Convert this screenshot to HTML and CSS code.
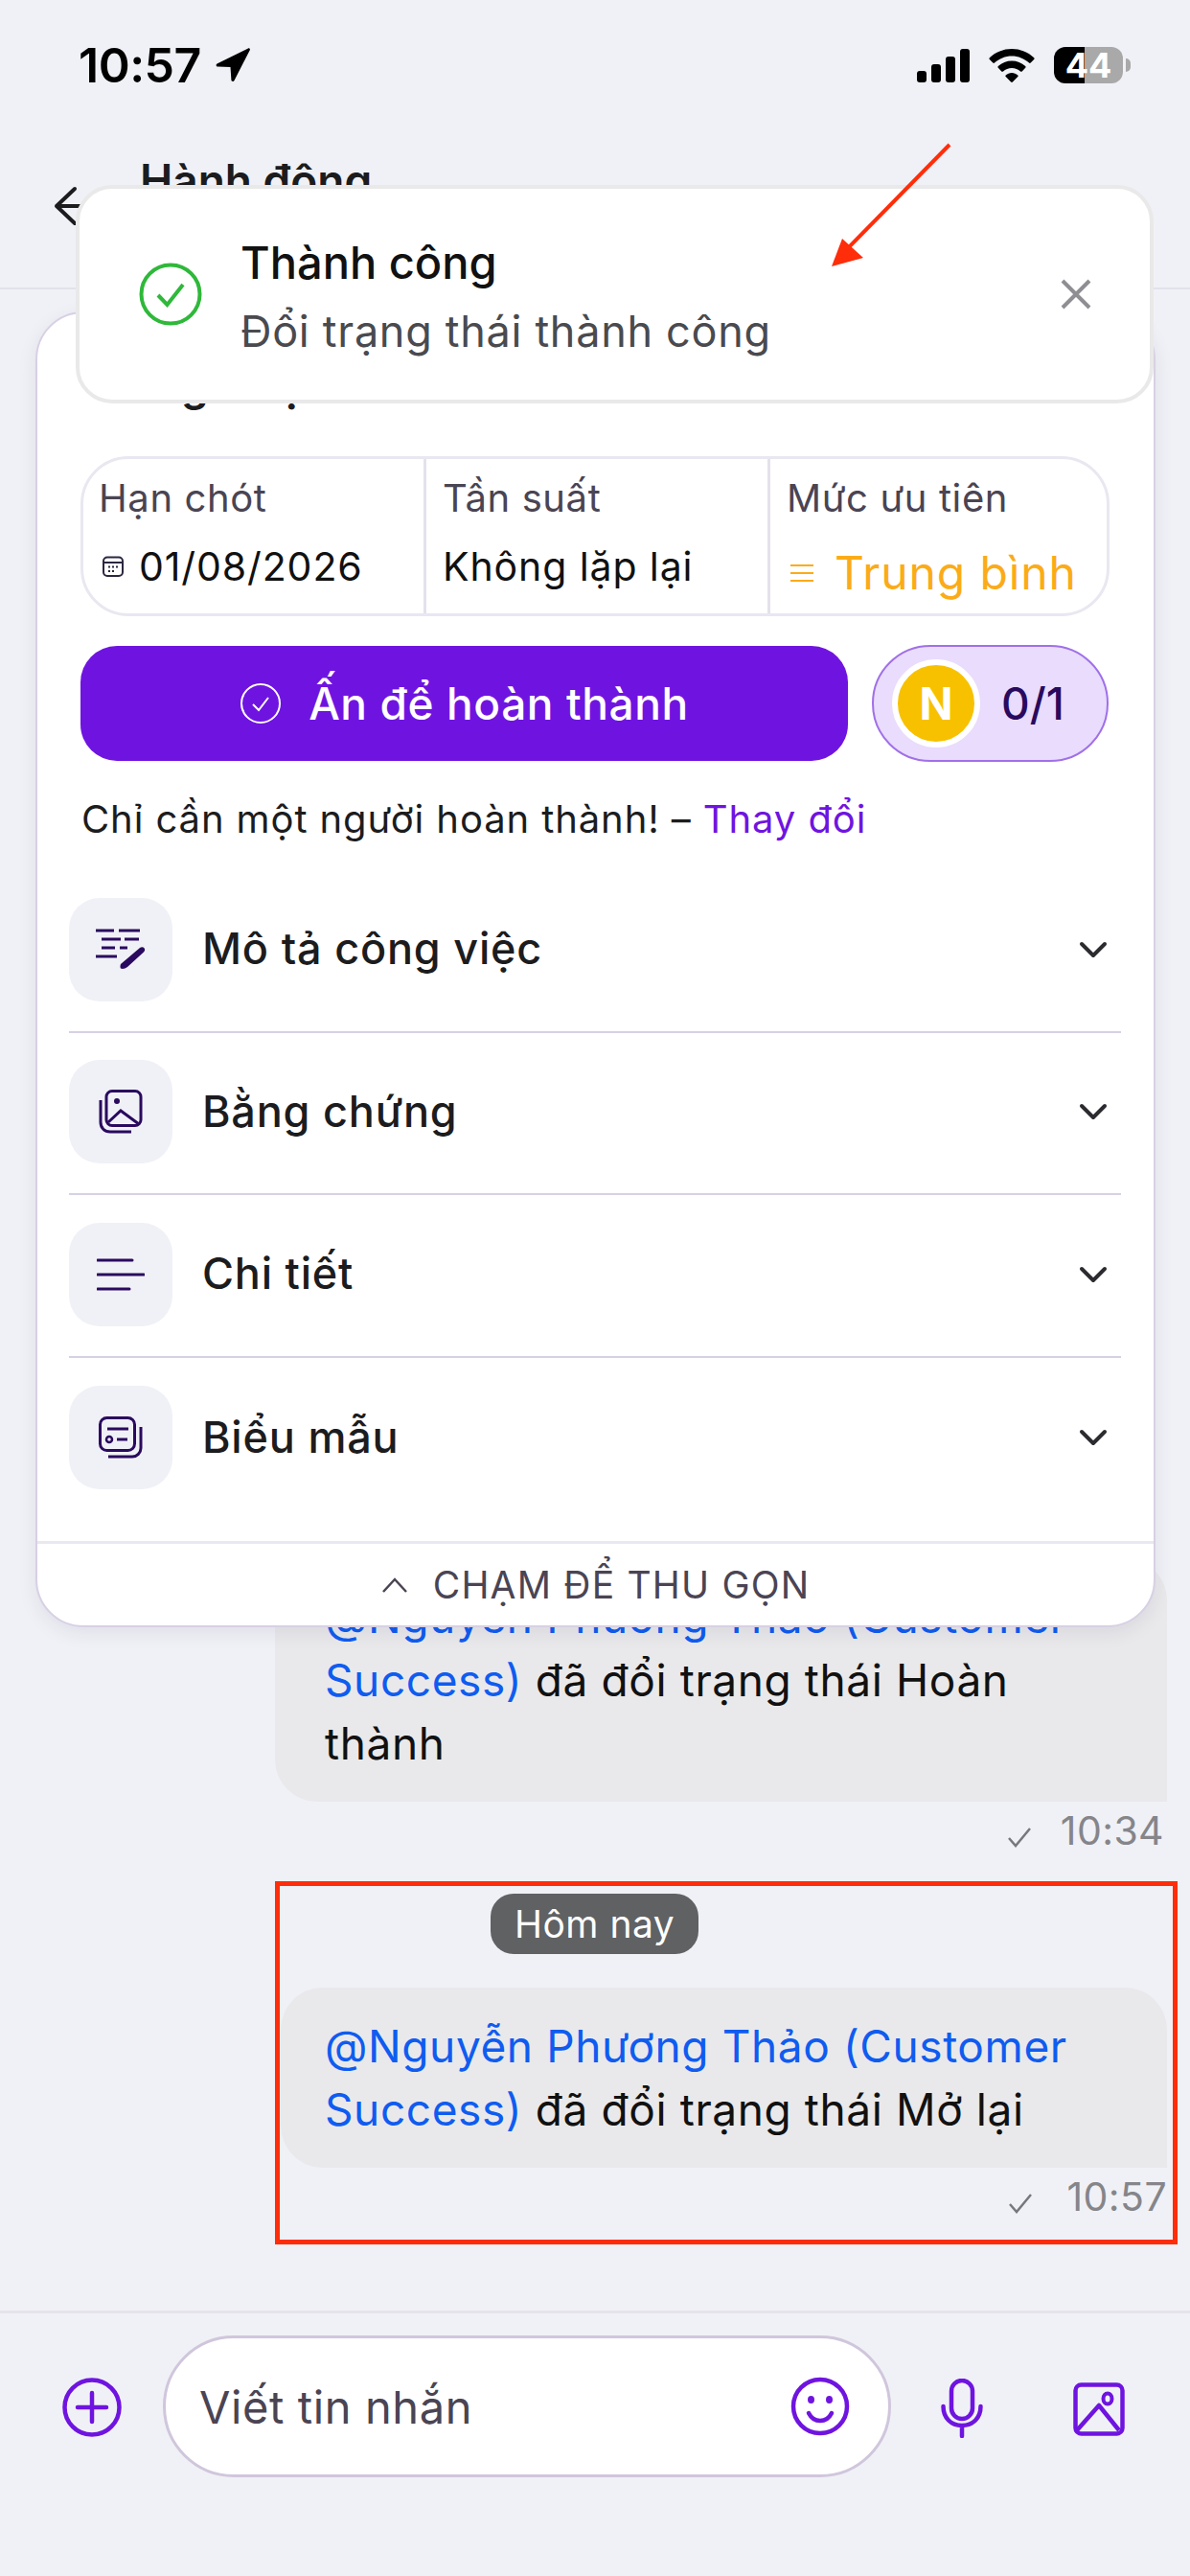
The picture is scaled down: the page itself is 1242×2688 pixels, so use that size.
FILE: index.html
```html
<!DOCTYPE html>
<html lang="vi">
<head>
  <meta charset="UTF-8">
  <meta name="viewport" content="width=device-width, initial-scale=1.0">
  <title>Hành động</title>
  <link rel="stylesheet" href="styles.css">
</head>
<body>
  <div class="screen">
    <!-- Status bar -->
    <div class="status-bar">
      <div class="status-left">
        <span class="clock">10:57</span>
        <svg class="loc-icon" width="38" height="38" viewBox="0 0 38 38"><path d="M35 1.500 2.500 17.500c-1.500.8-1 3 .7 3l13.300.6.9 13.400c.2 1.700 2.400 2 3.100.5L36.800 3.200c.5-1.100-.7-2.300-1.800-1.700z" fill="#000"/></svg>
      </div>
      <div class="status-right">
        <svg width="55" height="35" viewBox="0 0 55 35"><rect x="0" y="23" width="10" height="12" rx="3"/><rect x="15" y="16" width="10" height="19" rx="3"/><rect x="30" y="8" width="10" height="27" rx="3"/><rect x="45" y="0" width="10" height="35" rx="3"/></svg>
        <svg class="wifi" width="48" height="35" viewBox="0 0 48 35"><path d="M24 0c8.800 0 17 3.400 23.200 9.300.5.500.5 1.200 0 1.700l-3.500 3.600c-.5.500-1.200.5-1.700 0C37.200 10 30.800 7.400 24 7.400S10.800 10 6 14.600c-.5.500-1.200.5-1.700 0L.8 11c-.5-.5-.5-1.200 0-1.700C7 3.400 15.200 0 24 0zm0 12.500c5.300 0 10.300 2 14.200 5.600.5.500.5 1.200 0 1.700l-3.500 3.600c-.5.500-1.200.5-1.700 0-2.400-2.200-5.600-3.500-9-3.500s-6.600 1.300-9 3.500c-.5.500-1.200.5-1.700 0l-3.500-3.600c-.5-.5-.5-1.200 0-1.700 3.900-3.600 8.900-5.600 14.200-5.600zm0 12.500c2.400 0 4.600.9 6.300 2.400.5.500.5 1.200 0 1.700l-5.400 5.500c-.5.500-1.300.5-1.800 0l-5.400-5.500c-.5-.5-.5-1.200 0-1.700 1.700-1.500 3.900-2.400 6.300-2.400z"/></svg>
        <div class="battery"><span class="battery-level">44</span></div>
      </div>
    </div>

    <!-- Header -->
    <div class="top-bar">
      <svg class="back-icon" width="42" height="42" viewBox="0 0 42 42"><path d="M22 3 3 21l19 18M3 21h37" fill="none" stroke="#1c1c1e" stroke-width="4" stroke-linecap="round" stroke-linejoin="round"/></svg>
      <span class="top-title">Hành động</span>
    </div>

    <!-- Messages, partly under the task card -->
    <div class="messages">
      <div class="msg-group">
        <div class="bubble bubble-old">
          <a class="mention">@Nguyễn Phương Thảo (Customer</a> <a class="mention">Success)</a> đã đổi trạng thái Hoàn thành
        </div>
        <div class="msg-meta">
          <svg width="26" height="22" viewBox="0 0 26 22"><path d="M2 12l7 8L24 2" fill="none" stroke="#77777c" stroke-width="2.500"/></svg>
          <span>10:34</span>
        </div>
      </div>
      <div class="highlight">
        <div class="day-pill">Hôm nay</div>
        <div class="bubble">
          <a class="mention">@Nguyễn Phương Thảo (Customer</a> <a class="mention">Success)</a> đã đổi trạng thái Mở lại
        </div>
        <div class="msg-meta">
          <svg width="26" height="22" viewBox="0 0 26 22"><path d="M2 12l7 8L24 2" fill="none" stroke="#77777c" stroke-width="2.500"/></svg>
          <span>10:57</span>
        </div>
      </div>
    </div>

    <!-- Composer -->
    <div class="composer">
      <svg class="plus-icon" width="64" height="64" viewBox="0 0 64 64"><circle cx="32" cy="32" r="28.500" fill="none" stroke="#6f14e0" stroke-width="4.500"/><path d="M32 17v30M17 32h30" stroke="#6f14e0" stroke-width="4.500" stroke-linecap="round"/></svg>
      <div class="input-box">
        <span class="placeholder">Viết tin nhắn</span>
        <svg width="62" height="62" viewBox="0 0 62 62"><circle cx="31" cy="31" r="28" fill="none" stroke="#6f14e0" stroke-width="4.500"/><ellipse cx="21.500" cy="24" rx="3.500" ry="4" fill="#6f14e0"/><ellipse cx="40.500" cy="24" rx="3.500" ry="4" fill="#6f14e0"/><path d="M19 38c3 6 7 8 12 8s9-2 12-8" fill="none" stroke="#6f14e0" stroke-width="4.500" stroke-linecap="round"/></svg>
      </div>
      <svg class="mic-icon" width="44" height="62" viewBox="0 0 44 62"><rect x="11" y="2" width="22" height="40" rx="11" fill="none" stroke="#6f14e0" stroke-width="4.500"/><path d="M2.500 29c0 12 8 20 19.500 20s19.500-8 19.500-20M22 49v11" fill="none" stroke="#6f14e0" stroke-width="4.500" stroke-linecap="round"/></svg>
      <svg class="photo-icon" width="54" height="56" viewBox="0 0 54 56"><rect x="2.500" y="2.500" width="49" height="51" rx="6" fill="none" stroke="#6f14e0" stroke-width="4.500"/><ellipse cx="36" cy="17" rx="4.500" ry="5.500" fill="none" stroke="#6f14e0" stroke-width="4"/><path d="M4 50 27 24l21 26" fill="none" stroke="#6f14e0" stroke-width="4.500" stroke-linejoin="round"/></svg>
    </div>

    <!-- Task card over the chat -->
    <div class="task-card">
      <div class="task-title">Công việc</div>
      <div class="info-box">
        <div class="info-cell">
          <div class="info-label">Hạn chót</div>
          <div class="info-value">
            <svg width="24" height="24" viewBox="0 0 24 24"><rect x="2" y="2.500" width="20" height="19.500" rx="4" fill="none" stroke="#2c2640" stroke-width="2"/><path d="M2 8h20" stroke="#2c2640" stroke-width="2"/><path d="M7 12.500h2M11 12.500h2M15 12.500h2M7 17h2M11 17h2" stroke="#2c2640" stroke-width="2"/></svg>
            <span>01/08/2026</span>
          </div>
        </div>
        <div class="info-cell">
          <div class="info-label">Tần suất</div>
          <div class="info-value">Không lặp lại</div>
        </div>
        <div class="info-cell">
          <div class="info-label">Mức ưu tiên</div>
          <div class="info-value priority">
            <svg width="26" height="20" viewBox="0 0 26 20"><path d="M1 2h24M1 10h24M1 18h24" stroke="#fbab18" stroke-width="2"/></svg>
            <span>Trung bình</span>
          </div>
        </div>
      </div>

      <div class="action-row">
        <div class="done-btn">
          <svg width="44" height="44" viewBox="0 0 44 44"><circle cx="22" cy="22" r="20" fill="none" stroke="#fff" stroke-width="2"/><path d="M14 23l6 6 10-13" fill="none" stroke="#fff" stroke-width="2"/></svg>
          <span>Ấn để hoàn thành</span>
        </div>
        <div class="progress-pill">
          <div class="avatar">N</div>
          <span>0/1</span>
        </div>
      </div>

      <div class="assign-note">Chỉ cần một người hoàn thành! – <a class="link">Thay đổi</a></div>

      <div class="section-list">
        <div class="section-row">
          <div class="section-icon">
            <svg width="52" height="44" viewBox="0 0 52 44"><path d="M0 2h19M24 2h22M6 11h20M30 11h15M6 20h14M25 20h8M0 29h22" stroke="#2a0a5e" stroke-width="3"/><path d="M26 37l20-17c1.500-1.200 3.500-1 4.500.3s.8 3-.5 4.200L33 40c-2 1.600-4.500 2.300-6.500 1.800-1.200-.3-1.300-3.200-.5-4.800z" fill="#2a0a5e"/></svg>
          </div>
          <span class="section-name">Mô tả công việc</span>
          <svg class="chevron" width="30" height="18" viewBox="0 0 30 18"><path d="M3 3l12 12L27 3" fill="none" stroke="#2b2b30" stroke-width="4" stroke-linecap="round" stroke-linejoin="round"/></svg>
        </div>
        <div class="section-row">
          <div class="section-icon">
            <svg width="46" height="46" viewBox="0 0 46 46"><rect x="8" y="1.500" width="36" height="36" rx="6" fill="none" stroke="#2a0a5e" stroke-width="3"/><circle cx="19" cy="12" r="3" fill="#2a0a5e"/><path d="M10 34l13-12 19 14" fill="none" stroke="#2a0a5e" stroke-width="3"/><path d="M2 11v23c0 6 4 10 10 10h22" fill="none" stroke="#2a0a5e" stroke-width="3"/></svg>
          </div>
          <span class="section-name">Bằng chứng</span>
          <svg class="chevron" width="30" height="18" viewBox="0 0 30 18"><path d="M3 3l12 12L27 3" fill="none" stroke="#2b2b30" stroke-width="4" stroke-linecap="round" stroke-linejoin="round"/></svg>
        </div>
        <div class="section-row">
          <div class="section-icon">
            <svg width="50" height="34" viewBox="0 0 50 34"><path d="M1 2h36M1 17h48M1 32h33" stroke="#2a0a5e" stroke-width="3" stroke-linecap="round"/></svg>
          </div>
          <span class="section-name">Chi tiết</span>
          <svg class="chevron" width="30" height="18" viewBox="0 0 30 18"><path d="M3 3l12 12L27 3" fill="none" stroke="#2b2b30" stroke-width="4" stroke-linecap="round" stroke-linejoin="round"/></svg>
        </div>
        <div class="section-row">
          <div class="section-icon">
            <svg width="46" height="44" viewBox="0 0 46 44"><rect x="1.500" y="1.500" width="36" height="34" rx="7" fill="none" stroke="#2a0a5e" stroke-width="3"/><path d="M9 13h22M19 24h11" stroke="#2a0a5e" stroke-width="3"/><circle cx="11" cy="24" r="3" fill="none" stroke="#2a0a5e" stroke-width="2.500"/><path d="M44 11v22c0 5-4 9-9 9H10" fill="none" stroke="#2a0a5e" stroke-width="3"/></svg>
          </div>
          <span class="section-name">Biểu mẫu</span>
          <svg class="chevron" width="30" height="18" viewBox="0 0 30 18"><path d="M3 3l12 12L27 3" fill="none" stroke="#2b2b30" stroke-width="4" stroke-linecap="round" stroke-linejoin="round"/></svg>
        </div>
      </div>

      <div class="collapse-bar">
        <svg width="28" height="18" viewBox="0 0 28 18"><path d="M2 16 14 3l12 13" fill="none" stroke="#4a4453" stroke-width="2.500"/></svg>
        <span>CHẠM ĐỂ THU GỌN</span>
      </div>
    </div>

    <!-- Toast -->
    <div class="toast">
      <svg width="66" height="66" viewBox="0 0 66 66"><circle cx="33" cy="33" r="30.500" fill="none" stroke="#2fb83a" stroke-width="4"/><path d="M20 34l9.500 10L46 23" fill="none" stroke="#2fb83a" stroke-width="4"/></svg>
      <div class="toast-text">
        <div class="toast-title">Thành công</div>
        <div class="toast-sub">Đổi trạng thái thành công</div>
      </div>
      <svg class="toast-close" width="34" height="34" viewBox="0 0 34 34"><path d="M3 3l28 28M31 3 3 31" stroke="#8e8e93" stroke-width="4"/></svg>
    </div>

    <!-- Red annotation arrow -->
    <svg class="annot-arrow" width="140" height="140" viewBox="0 0 140 140"><path d="M133 3 22 116" stroke="#ff2d0a" stroke-width="4"/><path d="M10 130 21 101l22 20z" fill="#ff2d0a"/></svg>
  </div>
</body>
</html>
```

FILE: styles.css
```css
/* General page setup */
* {
  box-sizing: border-box;
}

body {
  margin: 0;
  font-family: Inter, "Noto Sans", sans-serif;
  background-color: #f0f1f6;
  color: #1c1c1e;
}

.screen {
  position: relative;
  width: 1242px;
  height: 2688px;
  display: flex;
  flex-direction: column;
  overflow: hidden;
}

/* Status bar */
.status-bar {
  height: 130px;
  padding: 38px 70px 0 82px;
  display: flex;
  justify-content: space-between;
  align-items: flex-start;
}

.status-left {
  display: flex;
  align-items: center;
  gap: 14px;
}

.clock {
  font-size: 50px;
  line-height: 60px;
  font-weight: 600;
  letter-spacing: -0.5px;
  color: #000;
}

.status-right {
  display: flex;
  align-items: center;
  gap: 20px;
  padding-top: 11px;
}

.battery {
  position: relative;
  width: 72px;
  height: 38px;
  border-radius: 12px;
  background: linear-gradient(to right, #000 0, #000 32px, #a9a9a9 32px);
  text-align: center;
  color: #fff;
  font-size: 36px;
  line-height: 38px;
  font-weight: 700;
}

.battery::after {
  content: "";
  position: absolute;
  right: -8px;
  top: 12px;
  width: 5px;
  height: 14px;
  border-radius: 0 5px 5px 0;
  background-color: #a9a9a9;
}

/* Header */
.top-bar {
  height: 172px;
  border-bottom: 2px solid #e2e2ea;
  padding: 30px 0 0 56px;
  display: flex;
  align-items: flex-start;
  gap: 48px;
}

.back-icon {
  margin-top: 34px;
}

.top-title {
  font-size: 46px;
  line-height: 56px;
  font-weight: 600;
}

/* Messages */
.messages {
  flex: 1;
  display: flex;
  flex-direction: column;
  justify-content: flex-end;
  align-items: flex-end;
  padding: 0 13px 69px 0;
}

.msg-group {
  width: 931px;
  margin-right: 11px;
  margin-bottom: 23px;
}

.highlight {
  width: 942px;
  height: 379px;
  border: 5px solid #ff2d0a;
  padding: 8px 6px 0 0;
  display: flex;
  flex-direction: column;
  align-items: flex-end;
}

.day-pill {
  align-self: flex-start;
  margin-left: 220px;
  height: 63px;
  padding: 0 25px;
  border-radius: 24px;
  background-color: #606163;
  color: #fff;
  font-size: 39px;
  line-height: 63px;
  letter-spacing: 0.5px;
}

.bubble {
  margin-top: 35px;
  width: 925px;
  padding: 28px 40px 28px 46px;
  border-radius: 44px 44px 0 44px;
  background-color: #e9e9eb;
  color: #111;
  font-size: 46px;
  line-height: 66px;
  letter-spacing: 0.6px;
}

.bubble-old {
  width: 100%;
  margin-top: 0;
  padding-left: 52px;
  padding-right: 60px;
}

.mention {
  color: #0f5cf0;
}

.msg-meta {
  display: flex;
  justify-content: flex-end;
  align-items: center;
  gap: 30px;
  height: 60px;
  color: #85858a;
  font-size: 41px;
  letter-spacing: 0.4px;
}

.msg-group .msg-meta {
  padding-right: 3px;
}

.highlight .msg-meta {
  gap: 36px;
}

.msg-meta svg {
  margin-top: 14px;
}

/* Composer */
.composer {
  height: 277px;
  border-top: 3px solid #e6e3ec;
  padding: 23px 0 0 64px;
  display: flex;
  align-items: flex-start;
}

.plus-icon {
  margin-top: 43px;
}

.input-box {
  width: 760px;
  height: 148px;
  margin-left: 42px;
  padding: 0 40px 0 35px;
  border: 3px solid #d0c6dc;
  border-radius: 74px;
  background-color: #fff;
  display: flex;
  justify-content: space-between;
  align-items: center;
}

.placeholder {
  font-size: 47px;
  color: #4a4453;
  letter-spacing: 0.6px;
}

.mic-icon {
  margin: 45px 0 0 52px;
}

.photo-icon {
  margin: 49px 0 0 94px;
}

/* Task card */
.task-card {
  position: absolute;
  left: 37px;
  top: 325px;
  width: 1169px;
  height: 1373px;
  display: flex;
  flex-direction: column;
  background-color: #fff;
  border: 2px solid #d8d0e4;
  border-radius: 50px;
  box-shadow: 0 6px 20px rgba(40, 20, 80, 0.08);
  overflow: hidden;
}

.task-title {
  margin: 46px 0 47px 60px;
  font-size: 46px;
  line-height: 56px;
  font-weight: 600;
  word-spacing: 22px;
}

.info-box {
  width: 1074px;
  height: 167px;
  margin-left: 45px;
  display: grid;
  grid-template-columns: 358px 359px 1fr;
  border: 3px solid #e9e7f0;
  border-radius: 50px;
}

.info-cell {
  padding: 16px 0 0 17px;
  border-right: 3px solid #e4e1ec;
}

.info-cell:first-child {
  padding-left: 16px;
}

.info-cell:last-child {
  border-right: none;
}

.info-label {
  font-size: 40px;
  line-height: 50px;
  color: #4a4453;
  letter-spacing: 0.6px;
}

.info-value {
  margin-top: 21px;
  display: flex;
  align-items: center;
  gap: 15px;
  font-size: 41px;
  line-height: 50px;
  letter-spacing: 0.9px;
  color: #111;
}

.info-value svg {
  margin-left: 3px;
}

.priority {
  margin-top: 28px;
  gap: 21px;
  font-size: 48px;
  color: #fbab18;
}

.action-row {
  margin: 30px 0 0 45px;
  display: flex;
  align-items: center;
  gap: 25px;
}

.done-btn {
  width: 801px;
  height: 120px;
  border-radius: 38px;
  background-color: #6f14e0;
  color: #fff;
  display: flex;
  justify-content: center;
  align-items: center;
  gap: 28px;
  font-size: 46px;
  font-weight: 500;
  letter-spacing: 0.6px;
}

.progress-pill {
  width: 247px;
  height: 122px;
  padding-left: 19px;
  border: 2px solid #a070e8;
  border-radius: 61px;
  background-color: #e9dcfc;
  display: flex;
  align-items: center;
  gap: 22px;
  color: #2a0a5e;
  font-size: 46px;
  font-weight: 500;
}

.avatar {
  width: 92px;
  height: 92px;
  border: 6px solid #fff;
  border-radius: 50%;
  background-color: #f7c100;
  color: #fff;
  font-size: 46px;
  font-weight: 700;
  line-height: 80px;
  text-align: center;
}

.assign-note {
  margin: 35px 0 0 46px;
  font-size: 40px;
  line-height: 50px;
  letter-spacing: 0.9px;
  color: #1c1c1e;
}

.link {
  color: #6f14e0;
}

/* Collapsible sections */
.section-list {
  margin: 28px 34px 0 33px;
  flex: 1;
}

.section-row {
  height: 169.500px;
  padding-bottom: 2px;
  border-bottom: 2px solid #d8d0e4;
  display: flex;
  align-items: center;
}

.section-row:last-child {
  border-bottom: none;
}

.section-icon {
  width: 108px;
  height: 108px;
  border-radius: 32px;
  background-color: #f0f1f6;
  display: flex;
  justify-content: center;
  align-items: center;
}

.section-name {
  flex: 1;
  margin-left: 31px;
  padding-bottom: 2px;
  font-size: 45px;
  font-weight: 500;
  letter-spacing: 0.8px;
}

.chevron {
  margin-right: 14px;
}

.collapse-bar {
  height: 88px;
  border-top: 3px solid #e9e7f0;
  display: flex;
  justify-content: center;
  align-items: center;
  gap: 26px;
  color: #4a4453;
  font-size: 39px;
  letter-spacing: 1.2px;
}

/* Toast */
.toast {
  position: absolute;
  left: 79px;
  top: 193px;
  width: 1125px;
  height: 228px;
  padding: 0 60px 0 62px;
  display: flex;
  align-items: center;
  background-color: #fff;
  border: 4px solid #e9e9e9;
  border-radius: 38px;
}

.toast-text {
  flex: 1;
  margin-left: 40px;
  padding-top: 5px;
}

.toast-title {
  font-size: 47px;
  line-height: 60px;
  font-weight: 500;
  color: #111;
}

.toast-sub {
  margin-top: 12px;
  font-size: 45px;
  line-height: 60px;
  color: #4a4a4f;
  letter-spacing: 0.7px;
}

/* Annotation */
.annot-arrow {
  position: absolute;
  left: 858px;
  top: 148px;
}
```
